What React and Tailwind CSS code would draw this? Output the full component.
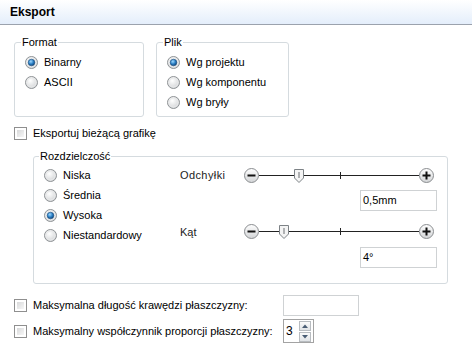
import React from "react";

function Radio({ checked }) {
  return (
    <svg width="13" height="13" viewBox="0 0 13 13" className="shrink-0">
      <defs>
        <radialGradient id="rg" cx="40%" cy="35%" r="70%">
          <stop offset="0%" stopColor="#ffffff" />
          <stop offset="100%" stopColor="#cfd1d3" />
        </radialGradient>
        <radialGradient id="rb" cx="40%" cy="35%" r="70%">
          <stop offset="0%" stopColor="#9fd8ff" />
          <stop offset="55%" stopColor="#2a7fc4" />
          <stop offset="100%" stopColor="#0f3f73" />
        </radialGradient>
      </defs>
      <circle cx="6.5" cy="6.5" r="6" fill="url(#rg)" stroke="#8f9396" strokeWidth="1" />
      <circle cx="6.5" cy="6.5" r="4.5" fill="none" stroke="#e9eaeb" strokeWidth="1" />
      {checked && <circle cx="6.5" cy="6.5" r="3.3" fill="url(#rb)" stroke="#1c4f80" strokeWidth="0.6" />}
    </svg>
  );
}

function Check() {
  return (
    <span className="shrink-0 w-[13px] h-[13px] border border-[#8f8f8f] bg-white p-[2px] flex">
      <span className="flex-1 bg-gradient-to-br from-[#d8d9da] to-[#f7f7f7]" />
    </span>
  );
}

function RadioRow({ checked, label }) {
  return (
    <div className="flex items-center h-[20px]">
      <Radio checked={checked} />
      <span className="ml-[6px]">{label}</span>
    </div>
  );
}

function RoundBtn({ plus }) {
  return (
    <svg width="15" height="15" viewBox="0 0 15 15" className="shrink-0">
      <defs>
        <linearGradient id="bg" x1="0" y1="0" x2="0" y2="1">
          <stop offset="0%" stopColor="#ffffff" />
          <stop offset="100%" stopColor="#d2d4d6" />
        </linearGradient>
      </defs>
      <circle cx="7.5" cy="7.5" r="7" fill="url(#bg)" stroke="#8a8d90" strokeWidth="1" />
      <rect x="3.5" y="6.5" width="8" height="2" fill="#111" />
      {plus && <rect x="6.5" y="3.5" width="2" height="8" fill="#111" />}
    </svg>
  );
}

function Slider({ pos }) {
  return (
    <div className="flex items-center w-[190px] h-[20px]">
      <RoundBtn />
      <div className="relative flex-1 h-px bg-[#222]">
        <span className="absolute left-[81px] top-[-3px] w-px h-[7px] bg-[#222]" />
        <svg
          width="10"
          height="14"
          viewBox="0 0 10 14"
          className="absolute top-[-6px]"
          style={{ left: pos - 5 }}
        >
          <path d="M0.5 0.5 H9.5 V9 L5 13.5 L0.5 9 Z" fill="#f4f4f4" stroke="#7d8286" />
          <path d="M5 3 V9" stroke="#6b6f73" />
        </svg>
      </div>
      <RoundBtn plus />
    </div>
  );
}

function TextInput({ value, w = "w-[77px]" }) {
  return (
    <div className={`${w} h-[21px] border border-[#cfd2d4] bg-white flex items-center pl-[2px] text-[11px]`}>
      {value}
    </div>
  );
}

export default function App() {
  return (
    <div
      className="w-[472px] h-[353px] bg-white text-black text-[11px] leading-[13px] overflow-hidden"
      style={{ fontFamily: '"Liberation Sans", Arial, sans-serif' }}
    >
      <div className="h-[25px] border-b border-[#9ba2ad] bg-gradient-to-b from-[#ffffff] to-[#e4eefb] flex items-center pl-[10px]">
        <span className="font-bold text-[12px]">Eksport</span>
      </div>

      <div className="pl-[14px]">
        <div className="flex mt-[11px] gap-[12px]">
          <fieldset className="w-[130px] h-[81px] border border-[#d5dbdf] rounded-[3px] pl-[10px] pt-[3px]">
            <legend className="px-[1px] ml-[-4px] leading-[13px]">Format</legend>
            <RadioRow checked label="Binarny" />
            <RadioRow label="ASCII" />
          </fieldset>
          <fieldset className="w-[133px] h-[81px] border border-[#d5dbdf] rounded-[3px] pl-[10px] pt-[3px]">
            <legend className="px-[1px] ml-[-4px] leading-[13px]">Plik</legend>
            <RadioRow checked label="Wg projektu" />
            <RadioRow label="Wg komponentu" />
            <RadioRow label="Wg bryły" />
          </fieldset>
        </div>

        <div className="flex items-center h-[20px] mt-[6px]">
          <Check />
          <span className="ml-[6px]">Eksportuj bieżącą grafikę</span>
        </div>

        <fieldset className="ml-[19px] mt-[7px] w-[415px] h-[134px] border border-[#d5dbdf] rounded-[3px] pt-[2px] flex">
          <legend className="px-[1px] ml-[5px] leading-[13px]">Rozdzielczość</legend>
          <div className="flex">
            <div className="w-[146px] pl-[10px]">
              <RadioRow label="Niska" />
              <RadioRow label="Średnia" />
              <RadioRow checked label="Wysoka" />
              <RadioRow label="Niestandardowy" />
            </div>
            <div className="w-[258px]">
              <div className="flex items-center h-[20px]">
                <span className="w-[64px] tracking-[0.4px] text-[#222]">Odchyłki</span>
                <Slider pos={40} />
              </div>
              <div className="mt-[5px] ml-[180px]">
                <TextInput value="0,5mm" />
              </div>
              <div className="flex items-center h-[20px] mt-[10px]">
                <span className="w-[64px] text-[#222] mt-[3px]">Kąt</span>
                <Slider pos={25} />
              </div>
              <div className="mt-[6px] ml-[180px]">
                <TextInput value="4°" />
              </div>
            </div>
          </div>
        </fieldset>

        <div className="flex items-center h-[21px] mt-[11px]">
          <Check />
          <span className="ml-[6px] w-[250px]">Maksymalna długość krawędzi płaszczyzny:</span>
          <TextInput value="" w="w-[76px]" />
        </div>

        <div className="flex items-center h-[24px] mt-[3px]">
          <Check />
          <span className="ml-[6px] w-[250px]">Maksymalny współczynnik proporcji płaszczyzny:</span>
          <div className="w-[31px] h-[24px] border border-[#a3a3a3] bg-white flex items-center">
            <span className="pl-[2px] flex-1 text-[12px]">3</span>
            <div className="flex flex-col gap-[1px] mr-[2px]">
              <span className="w-[12px] h-[10px] border border-[#b8bcc0] bg-gradient-to-b from-[#fbfbfb] to-[#e0e3e6] flex items-center justify-center">
                <svg width="6" height="4" viewBox="0 0 6 4"><path d="M0 4 L3 0.5 L6 4 Z" fill="#4a5d74" /></svg>
              </span>
              <span className="w-[12px] h-[10px] border border-[#b8bcc0] bg-gradient-to-b from-[#fbfbfb] to-[#e0e3e6] flex items-center justify-center">
                <svg width="6" height="4" viewBox="0 0 6 4"><path d="M0 0 L3 3.5 L6 0 Z" fill="#4a5d74" /></svg>
              </span>
            </div>
          </div>
        </div>
      </div>
    </div>
  );
}
